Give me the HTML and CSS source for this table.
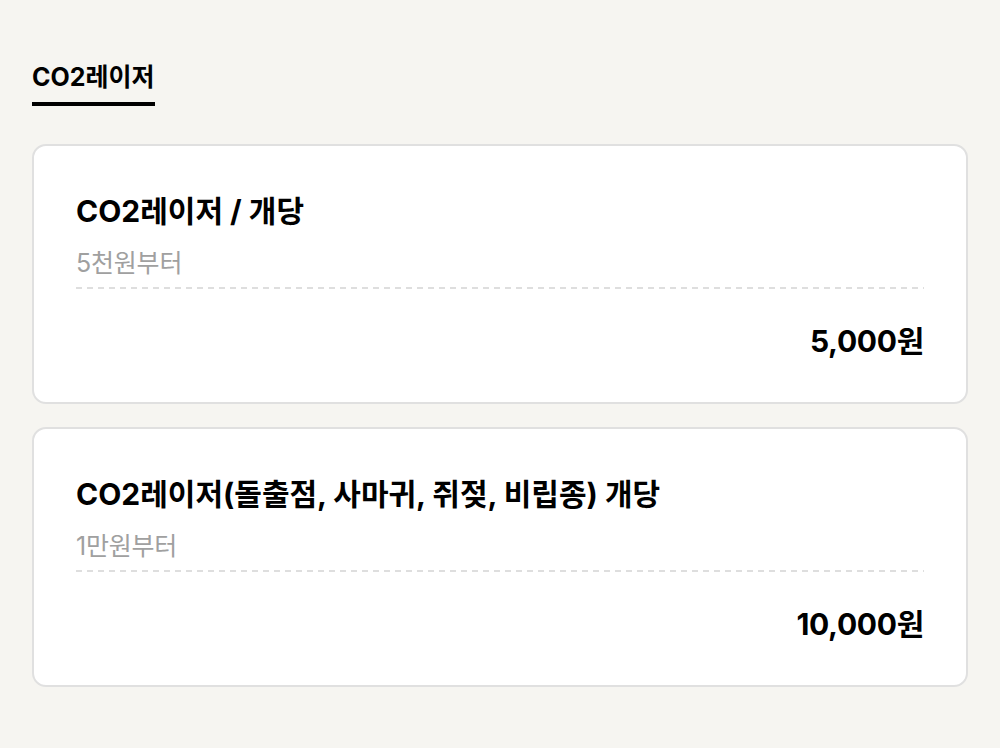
FILE: index.html
```html
<!DOCTYPE html>
<html lang="ko">
<head>
    <meta charset="UTF-8">
    <meta name="viewport" content="width=device-width, initial-scale=1.0">
    <title>CO2레이저</title>
    <link rel="stylesheet" href="styles.css">
</head>
<body>
    <nav class="tabs">
        <span class="tab active">CO2레이저</span>
    </nav>
    <ul class="price-list">
        <li class="price-card">
            <h2 class="item-title">CO2레이저 / 개당</h2>
            <p class="item-desc">5천원부터</p>
            <div class="divider"></div>
            <div class="item-price">5,000원</div>
        </li>
        <li class="price-card">
            <h2 class="item-title">CO2레이저(돌출점, 사마귀, 쥐젖, 비립종) 개당</h2>
            <p class="item-desc">1만원부터</p>
            <div class="divider"></div>
            <div class="item-price">10,000원</div>
        </li>
    </ul>
</body>
</html>
```

FILE: styles.css
```css
body {
    margin: 0;
    padding: 60px 32px 0 32px;
    background-color: #f6f5f1;
    font-family: Inter, "Noto Sans CJK KR", sans-serif;
    color: #000;
}
.tabs {
    display: flex;
    margin-bottom: 38px;
}
.tab {
    font-size: 25px;
    font-weight: 700;
    line-height: 34px;
    padding-bottom: 8px;
    letter-spacing: 0;
}
.tab.active {
    border-bottom: 4px solid #000;
}
.price-list {
    list-style: none;
    margin: 0;
    padding: 0;
    display: flex;
    flex-direction: column;
    gap: 23px;
}
.price-card {
    background-color: #fff;
    border: 2px solid #e0e0e0;
    border-radius: 14px;
    padding: 45px 42px 41px 42px;
}
.item-title {
    margin: 0;
    font-size: 30px;
    font-weight: 700;
    line-height: 40px;
    letter-spacing: 0;
}
.item-desc {
    margin: 16px 0 0 0;
    font-size: 25px;
    line-height: 32px;
    color: #a0a0a0;
    letter-spacing: -0.2px;
}
.divider {
    margin-top: 8px;
    height: 2px;
    background-image: repeating-linear-gradient(90deg, #dedede 0 6px, transparent 6px 11px);
}
.item-price {
    margin-top: 32px;
    text-align: right;
    font-size: 30px;
    font-weight: 700;
    line-height: 40px;
    letter-spacing: -0.3px;
}
```
